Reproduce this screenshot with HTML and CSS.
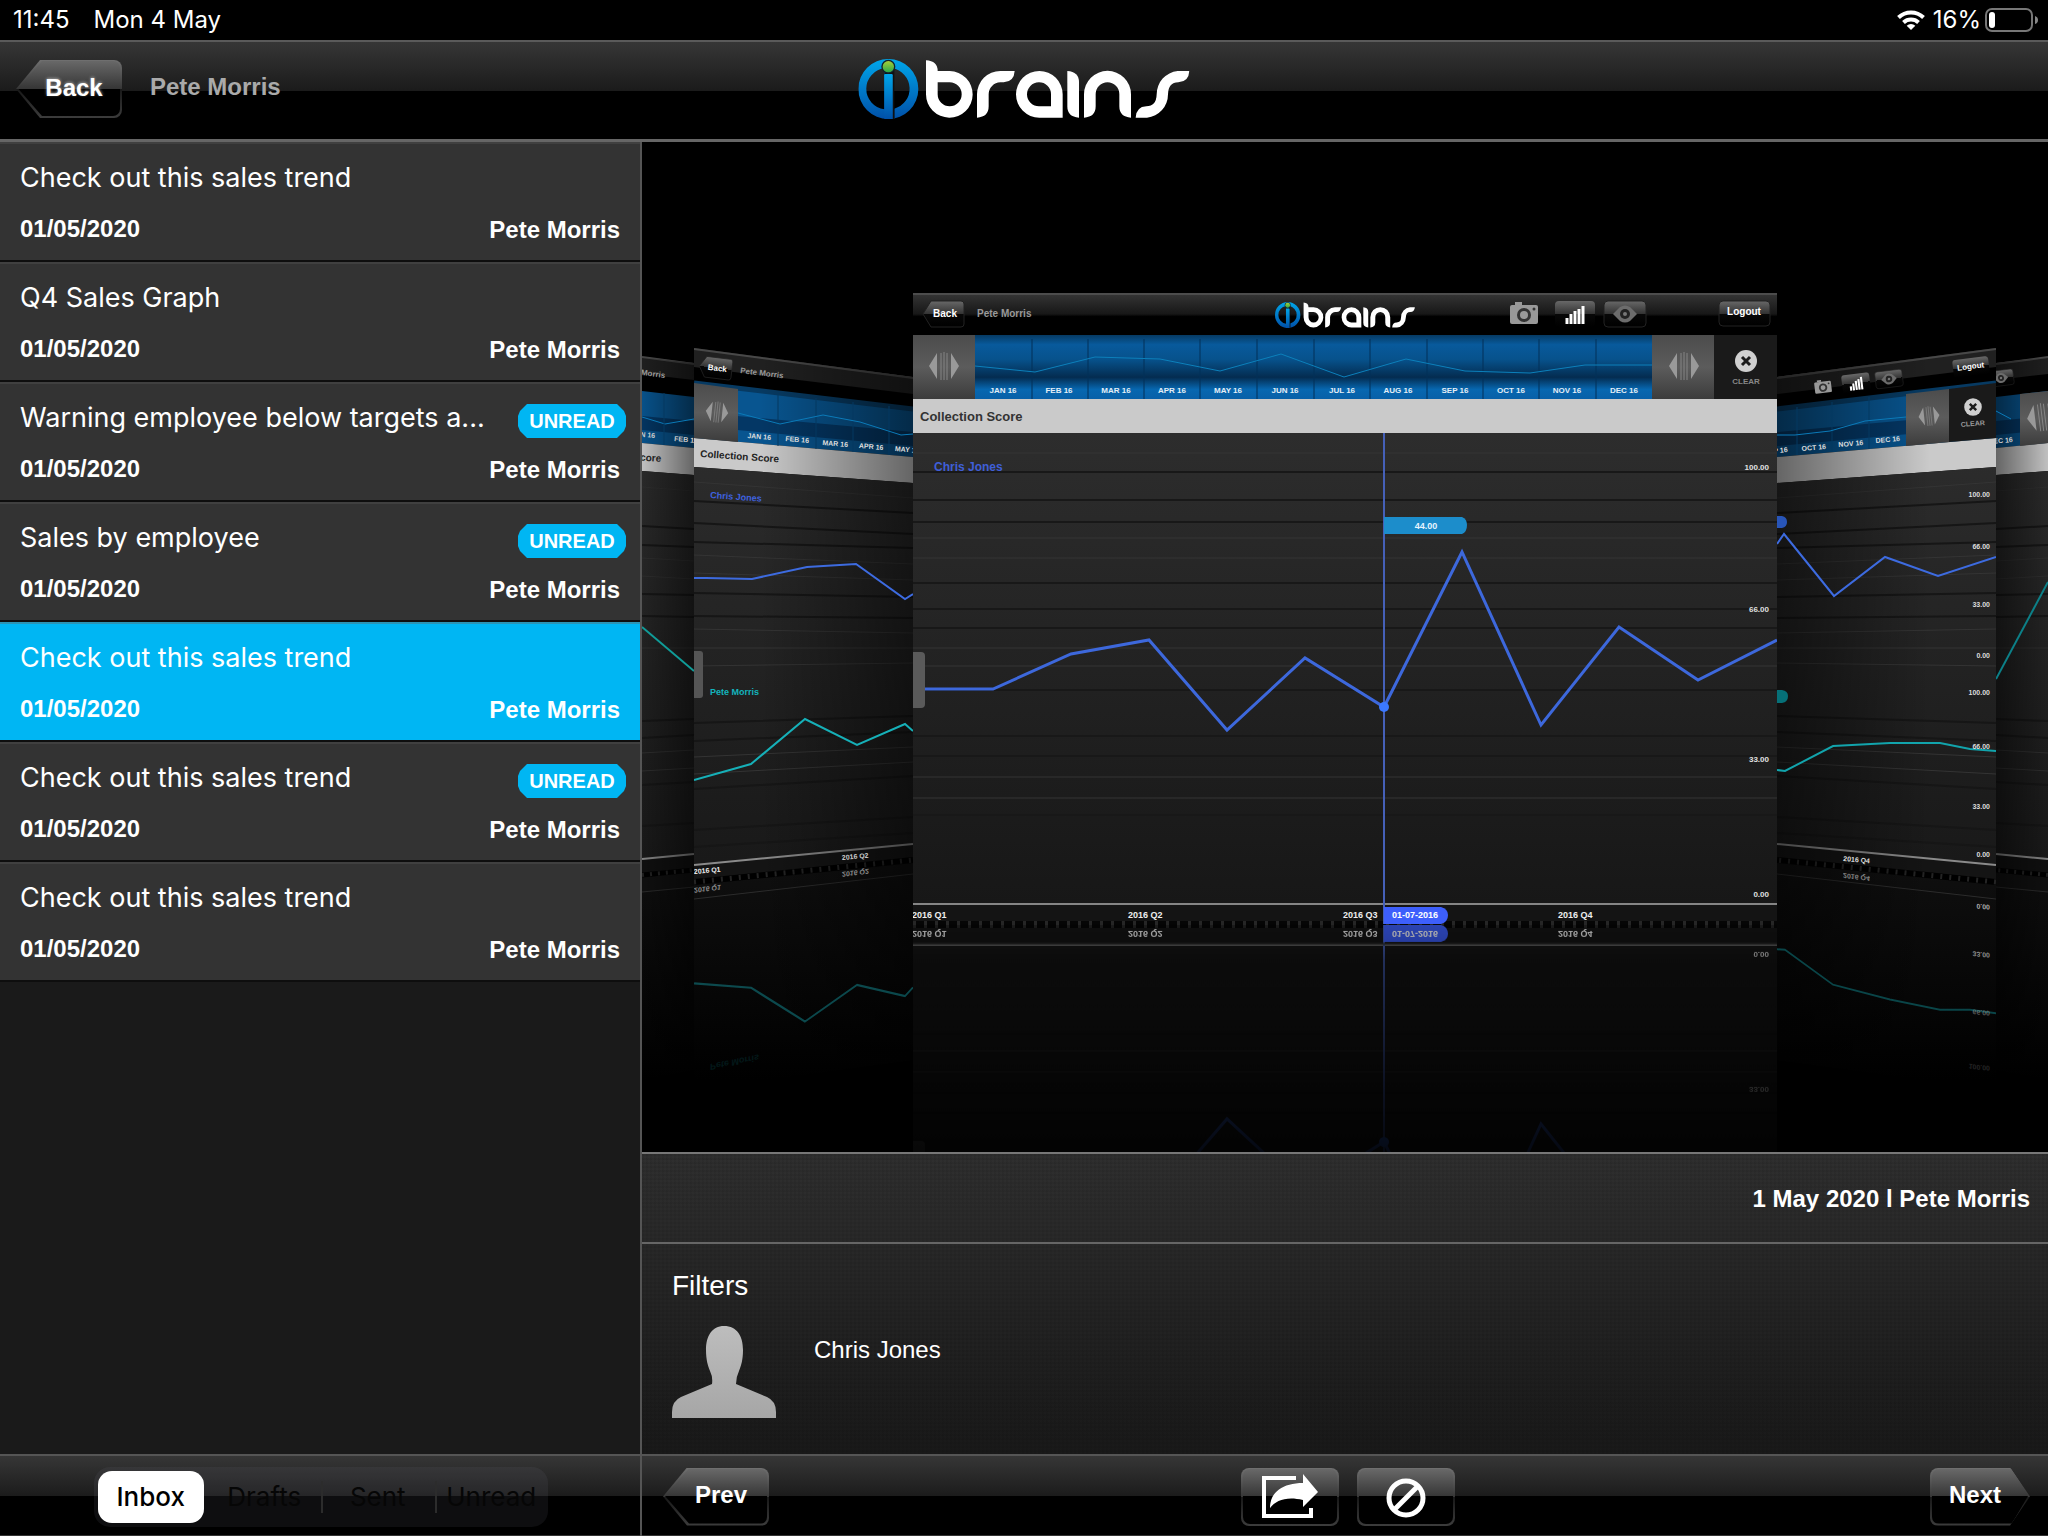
FILE: index.html
```html
<!DOCTYPE html>
<html lang="en">
<head>
<meta charset="utf-8">
<meta name="viewport" content="width=device-width, initial-scale=1">
<title>ibrains inbox</title>
<link rel="stylesheet" href="styles.css">
</head>
<body>
<div class="status">
  <span>11:45</span>
  <span>Mon 4 May</span>
  <span class="status-right">
    <svg class="wifi" viewBox="0 0 28 20" aria-hidden="true"><g fill="none" stroke="#fff" stroke-width="4"><path d="M1.500 7.500A18 18 0 0 1 26.500 7.500"/><path d="M6.500 12.500A11 11 0 0 1 21.500 12.500"/></g><path d="M14 20L9.700 15.800A6.200 6.200 0 0 1 18.300 15.800Z" fill="#fff"/></svg>
    <span>16%</span>
    <svg class="battery" viewBox="0 0 54 24" aria-hidden="true"><rect x="1" y="1" width="46" height="22" rx="6" fill="none" stroke="#777" stroke-width="2"/><rect x="4" y="4" width="6" height="16" rx="3" fill="#fff"/><path d="M50 8Q53 9 53 12Q53 15 50 16Z" fill="#888"/></svg>
  </span>
</div>

<header class="header">
  <div class="header-left">
    <button class="btn btn-left back" type="button">Back</button>
    <span class="user">Pete Morris</span>
  </div>
  <svg class="logo" viewBox="54 180 994 180" role="img" aria-label="ibrains">
    <defs>
      <linearGradient id="ring" x1="0" y1="0" x2="0" y2="1"><stop offset="0" stop-color="#00a6ea"/><stop offset="1" stop-color="#0050a8"/></linearGradient>
      <linearGradient id="dot" x1="0" y1="0" x2="0" y2="1"><stop offset="0" stop-color="#a6ce39"/><stop offset="1" stop-color="#2ba84a"/></linearGradient>
      <symbol id="brand" viewBox="54 180 994 180" preserveAspectRatio="none">
        <path fill="url(#ring)" fill-rule="evenodd" d="M144 180A90 90 0 1 1 144 360A90 90 0 1 1 144 180ZM132 331V208A62 62 0 0 0 132 331ZM162 329A62 62 0 0 0 156 208V225L157 360H162Z"/>
        <path fill="#111" d="M157 206H162V360H157ZM132 206H157V226H132Z"/>
        <path fill="url(#ring)" d="M132 229Q132 225 136 225H153Q157 225 157 229V360H132Z"/>
        <circle cx="144" cy="203" r="21" fill="#10222c"/><circle cx="144" cy="203" r="17" fill="url(#dot)"/>
        <g fill="#fff" fill-rule="evenodd">
          <path d="M257 184Q292 186 292 216H328A70 70 0 1 1 257 286ZM292 250V286A36 36 0 1 0 328 250Z"/>
          <path d="M410 356V286A70 70 0 0 1 480 216H523Q521 249 490 250H480A36 36 0 0 0 445 286V322Q445 354 410 356Z"/>
          <path d="M667 356H597A70 70 0 1 1 667 286ZM632 322V286A36 36 0 1 0 597 322Z"/>
          <path d="M681 216Q716 218 716 250V356Q681 354 681 322Z"/>
          <path d="M731 356V286A70 70 0 0 1 872 286V356Q837 354 837 322V286A35 36 0 0 0 766 286V322Q766 354 731 356Z"/>
          <path d="M886 356Q888 323 918 322Q948 322 949 286A70 70 0 0 1 1012 216H1047Q1045 249 1014 250Q984 250 983 286A70 70 0 0 1 920 356Z"/>
        </g>
      </symbol>
    </defs>
    <use href="#brand" x="54" y="180" width="994" height="180"/>
  </svg>
</header>

<main class="main">
  <section class="sidebar">
    <ul class="messages">
      <li class="message"><div class="message-main"><h2>Check out this sales trend</h2><time>01/05/2020</time></div><div class="message-side"><span class="sender">Pete Morris</span></div></li>
      <li class="message"><div class="message-main"><h2>Q4 Sales Graph</h2><time>01/05/2020</time></div><div class="message-side"><span class="sender">Pete Morris</span></div></li>
      <li class="message"><div class="message-main"><h2>Warning employee below targets a...</h2><time>01/05/2020</time></div><div class="message-side"><span class="badge">UNREAD</span><span class="sender">Pete Morris</span></div></li>
      <li class="message"><div class="message-main"><h2>Sales by employee</h2><time>01/05/2020</time></div><div class="message-side"><span class="badge">UNREAD</span><span class="sender">Pete Morris</span></div></li>
      <li class="message selected"><div class="message-main"><h2>Check out this sales trend</h2><time>01/05/2020</time></div><div class="message-side"><span class="sender">Pete Morris</span></div></li>
      <li class="message"><div class="message-main"><h2>Check out this sales trend</h2><time>01/05/2020</time></div><div class="message-side"><span class="badge">UNREAD</span><span class="sender">Pete Morris</span></div></li>
      <li class="message"><div class="message-main"><h2>Check out this sales trend</h2><time>01/05/2020</time></div><div class="message-side"><span class="sender">Pete Morris</span></div></li>
    </ul>
    <div class="toolbar toolbar-side">
      <div class="segments" role="radiogroup" aria-label="Folder">
        <label><input type="radio" name="folder" checked><span>Inbox</span></label>
        <label><input type="radio" name="folder"><span>Drafts</span></label>
        <label><input type="radio" name="folder"><span>Sent</span></label>
        <label><input type="radio" name="folder"><span>Unread</span></label>
      </div>
    </div>
  </section>

  <section class="content">
    <div class="stage">
    <svg class="flow" viewBox="642 142 1406 1010" preserveAspectRatio="xMidYMid slice">
      <defs>
        <linearGradient id="bar" x1="0" y1="0" x2="0" y2="1"><stop offset="0" stop-color="#363636"/><stop offset=".5" stop-color="#171717"/><stop offset=".56" stop-color="#000"/></linearGradient>
        <linearGradient id="blue" x1="0" y1="0" x2="0" y2="1"><stop offset="0" stop-color="#063a63"/><stop offset=".15" stop-color="#085a9c"/><stop offset=".38" stop-color="#07528c"/><stop offset=".66" stop-color="#042c50"/><stop offset=".85" stop-color="#0767b0"/><stop offset="1" stop-color="#0860a8"/></linearGradient>
        <linearGradient id="plot" gradientUnits="userSpaceOnUse" x1="0" y1="433" x2="0" y2="904"><stop offset="0" stop-color="#2d2d2d"/><stop offset="1" stop-color="#171717"/></linearGradient>
        <linearGradient id="grip" x1="0" y1="0" x2="0" y2="1"><stop offset="0" stop-color="#4c4c4c"/><stop offset=".5" stop-color="#5c5c5c"/><stop offset="1" stop-color="#3c3c3c"/></linearGradient>
        <linearGradient id="key" x1="0" y1="0" x2="0" y2="1"><stop offset="0" stop-color="#686868"/><stop offset=".5" stop-color="#333"/><stop offset=".5" stop-color="#080808"/><stop offset="1" stop-color="#000"/></linearGradient>
        <linearGradient id="shade" gradientUnits="userSpaceOnUse" x1="760" y1="0" x2="913" y2="0"><stop offset="0" stop-opacity="0"/><stop offset="1" stop-opacity=".5"/></linearGradient>
        <linearGradient id="shadeFar" gradientUnits="userSpaceOnUse" x1="642" y1="0" x2="694" y2="0"><stop offset="0" stop-opacity=".05"/><stop offset="1" stop-opacity=".5"/></linearGradient>
        <linearGradient id="sink" gradientUnits="userSpaceOnUse" x1="0" y1="870" x2="0" y2="1080"><stop offset="0" stop-color="#0f0f0f"/><stop offset="1" stop-color="#000"/></linearGradient>
        <linearGradient id="fade" gradientUnits="userSpaceOnUse" x1="0" y1="924" x2="0" y2="1152"><stop offset="0" stop-color="#b4b4b4"/><stop offset=".09" stop-color="#a0a0a0"/><stop offset=".16" stop-color="#7c7c7c"/><stop offset=".7" stop-color="#303030"/><stop offset="1" stop-color="#161616"/></linearGradient>
        <mask id="mirrorMask" maskUnits="userSpaceOnUse" x="913" y="924" width="864" height="228"><rect x="913" y="924" width="864" height="228" fill="url(#fade)"/></mask>
        <clipPath id="cardClip"><rect x="913" y="293" width="864" height="632"/></clipPath>
        <clipPath id="left"><path d="M694 340H913V1152H694Z"/></clipPath>
        <clipPath id="leftFar"><path d="M642 340H694V1152H642Z"/></clipPath>
        <clipPath id="right"><path d="M1777 340H1996V1152H1777Z"/></clipPath>
        <clipPath id="rightFar"><path d="M1996 340H2048V1152H1996Z"/></clipPath>
        <g id="arrows"><path d="M-15 0L-7-13V13ZM15 0L7-13V13Z" fill="#999"/><path d="M-3-13V14M0-14V14M3-13V14" stroke="#858585"/></g>
        <g id="camera"><rect x="-14" y="-9" width="28" height="19" rx="2" fill="#999"/><path d="M-9-9V-12H-2V-9" fill="#999"/><circle r="7" cy="1" fill="#333"/><circle r="4" cy="1" fill="#999"/><circle cx="10" cy="-5" r="1.500" fill="#333"/></g>
        <g id="bars"><rect x="-20" y="-13" width="40" height="26" rx="4" fill="url(#key)"/><path d="M-8 10V4M-4 10V0M0 10V-3M4 10V-5M8 10V-8" stroke="#fff" stroke-width="3"/></g>
        <g id="eye"><rect x="-21" y="-13" width="42" height="26" rx="4" fill="url(#key)" stroke="#222"/><path d="M-12 0L-5-7Q0-10 5-7L12 0L5 7Q0 10-5 7Z" fill="#6c6c6c"/><circle r="5" fill="#222"/><circle r="2" fill="#777"/></g>
        <g id="clearIcon"><circle r="11" fill="#d0d0d0"/><path d="M-4-4L4 4M4-4L-4 4" stroke="#1b1b1b" stroke-width="3"/></g>
        <g id="backKey"><path d="M-21 0L-13-13H17Q20-13 20-10V10Q20 13 17 13H-13Z" fill="url(#key)" stroke="#222"/></g>

        <g id="sideFrame">
          <path d="M694 348L913 377V413L694 387Z" fill="#000"/>
          <path d="M694 348L913 377V394L694 367Z" fill="#202020"/>
          <path d="M694 349L913 378" stroke="#484848" stroke-width="2"/>
          <path d="M694 383L913 409V457L694 438Z" fill="#085590"/>
          <path d="M694 412L913 432V446L694 426Z" fill="#04305a" opacity=".8"/>
          <path d="M694 383L913 409" stroke="#073a62" stroke-width="5"/>
          <path d="M694 438L913 457V483L694 467Z" fill="#cacaca"/>
          <path d="M694 467L913 483V844L694 865Z" fill="url(#plot)"/>
          <g fill="none" stroke="#343434"><path d="M694 482L913 498M694 555L913 564M694 573L913 580M694 648L913 648M694 757L913 747M694 774L913 762M694 629L913 633M694 666L913 663"/></g>
          <g fill="none" stroke="#161616" stroke-width="2"><path d="M694 501L913 513M694 523L913 534M694 542L913 548M694 593L913 597M694 616L913 618M694 723L913 716M694 741L913 732M694 789L913 776M694 830L913 817M694 847L913 833"/></g>
          <path d="M694 865L913 844V860L694 882Z" fill="#141414"/>
          <path d="M694 882L913 860V1060L694 1090Z" fill="url(#sink)"/>
          <path d="M694 882L913 860" stroke="#000" stroke-width="6"/>
          <path d="M694 882L913 860" stroke="#242424" stroke-width="5" stroke-dasharray="2 7"/>
          <path d="M694 865L913 844" stroke="#8a8a8a" stroke-width="2"/>
          <path d="M694 899L913 874" stroke="#2c2c2c"/>
          <path d="M694 348L913 377V1152H694Z" fill="url(#shade)"/>
        </g>
        <g id="farFrame">
          <path d="M642 357L694 363V398L642 391Z" fill="#000"/>
          <path d="M642 357L694 363V380L642 374Z" fill="#202020"/>
          <path d="M642 357L694 364" stroke="#484848" stroke-width="2"/>
          <path d="M642 391L694 397V448L642 443Z" fill="#085590"/>
          <path d="M642 416L694 421V435L642 430Z" fill="#04305a" opacity=".8"/>
          <path d="M642 443L694 448V475L642 471Z" fill="#cacaca"/>
          <path d="M642 471L694 475V854L642 859Z" fill="url(#plot)"/>
          <g fill="none" stroke="#303030"><path d="M642 487L694 491M642 558L694 561M642 576L694 579M642 648H694M642 753L694 750M642 771L694 768"/></g>
          <g fill="none" stroke="#161616" stroke-width="2"><path d="M642 526L694 529M642 545L694 547M642 594L694 595M642 616L694 617M642 721L694 719M642 738L694 735M642 785L694 782M642 826L694 823"/></g>
          <path d="M642 859L694 854V892L642 896Z" fill="#101010"/>
          <path d="M642 892L694 887V1070L642 1080Z" fill="url(#sink)"/>
          <path d="M642 875L694 870" stroke="#000" stroke-width="5"/>
          <path d="M642 875L694 870" stroke="#222" stroke-width="4" stroke-dasharray="2 6"/>
          <path d="M642 859L694 854" stroke="#888" stroke-width="2"/>
          <path d="M642 892L694 887" stroke="#2c2c2c"/>
          <path d="M642 357L694 363V1152H642Z" fill="url(#shadeFar)"/>
        </g>
      </defs>

      <rect x="642" y="142" width="1406" height="1010" fill="#000"/>

      <g clip-path="url(#leftFar)">
        <use href="#farFrame"/>
        <text class="micro" x="665" y="378" text-anchor="end" fill="#999" transform="rotate(7 665 378)">Pete Morris</text>
        <text class="side-month" x="655" y="438" text-anchor="end" fill="#ccc" transform="rotate(5 655 438)">JAN 16</text>
        <text class="side-month" x="674" y="441" fill="#ccc" transform="rotate(5 674 441)">FEB 16</text>
        <text class="small" x="661" y="462" text-anchor="end" fill="#222" transform="rotate(4 661 462)">Collection Score</text>
        <path d="M642 417L665 424L694 419" fill="none" stroke="#0b7ab8" stroke-width="1"/>
        <path d="M664 393V445" stroke="#043860"/>
        <path d="M642 627L694 671" stroke="#109c98" stroke-width="2"/>
      </g>

      <g clip-path="url(#rightFar)">
        <use href="#farFrame" transform="translate(2690 0) scale(-1 1)"/>
        <use href="#eye" transform="translate(2001 378) rotate(-7) scale(.6)"/>
        <path d="M2020 394L2048 391V443L2020 446Z" fill="url(#grip)"/>
        <use href="#arrows" transform="translate(2042 417) rotate(-7)"/>
        <path d="M1996 411L2011 419" stroke="#0b7ab8"/>
        <text class="side-month" x="2013" y="442" text-anchor="end" fill="#ccc" transform="rotate(-5 2013 442)">DEC 16</text>
        <path d="M1996 679L2048 582" stroke="#0c8088" stroke-width="2"/>
      </g>

      <g clip-path="url(#left)">
        <use href="#sideFrame"/>
        <use href="#backKey" transform="translate(716 368) rotate(7) scale(.8)"/>
        <text class="micro" x="717" y="371" text-anchor="middle" fill="#fff" transform="rotate(7 717 371)">Back</text>
        <text class="micro" x="740" y="373" fill="#999" transform="rotate(7 740 373)">Pete Morris</text>
        <path d="M694 383L738 389V442L694 438Z" fill="url(#grip)"/>
        <use href="#arrows" transform="translate(717 412) rotate(6) scale(.75)"/>
        <path d="M778 393V446M816 398V449M853 402V452M889 406V455" stroke="#043860"/>
        <path d="M738 413L780 424L823 415L860 422L901 435L913 434" fill="none" stroke="#0b7ab8"/>
        <g class="side-month" text-anchor="middle" fill="#ddd">
          <text x="759" y="439" transform="rotate(5 759 439)">JAN 16</text>
          <text x="797" y="442" transform="rotate(5 797 442)">FEB 16</text>
          <text x="835" y="446" transform="rotate(5 835 446)">MAR 16</text>
          <text x="871" y="449" transform="rotate(5 871 449)">APR 16</text>
          <text x="907" y="452" transform="rotate(5 907 452)">MAY 16</text>
        </g>
        <text class="small" x="700" y="457" fill="#222" transform="rotate(4 700 457)">Collection Score</text>
        <text class="tiny" x="710" y="498" fill="#3f63e0" transform="rotate(4 710 498)">Chris Jones</text>
        <path d="M694 578H706L752 579L807 567L856 564L905 599L913 594" fill="none" stroke="#3d6be0" stroke-width="2"/>
        <text class="tiny" x="710" y="695" fill="#13b5bd">Pete Morris</text>
        <path id="tealLeft" d="M694 780L751 764L805 719L857 745L905 724L913 731" fill="none" stroke="#16b0b8" stroke-width="2"/>
        <use href="#tealLeft" transform="matrix(1 -.2055 0 -1 0 1906)" opacity=".4"/>
        <path d="M694 651H700Q703 651 703 654V695Q703 698 700 698H694Z" fill="#555"/>
        <text class="side-month" x="694" y="874" fill="#eee" transform="rotate(-5 694 874)">2016 Q1</text>
        <text class="side-month" x="842" y="860" fill="#ccc" transform="rotate(-5 842 860)">2016 Q2</text>
        <g class="side-month" opacity=".6" fill="#ddd"><text transform="matrix(1 -.12 0 -1 694 888)">2016 Q1</text><text transform="matrix(1 -.12 0 -1 842 872)">2016 Q2</text></g>
        <text class="tiny" transform="matrix(1 -.2 0 -1 710 1064)" fill="#13b5bd" opacity=".12">Pete Morris</text>
      </g>

      <g clip-path="url(#right)">
        <use href="#sideFrame" transform="translate(2690 0) scale(-1 1)"/>
        <use href="#camera" transform="translate(1823 387) rotate(-7) scale(.6)"/>
        <use href="#bars" transform="translate(1856 383) rotate(-7) scale(.7)"/>
        <use href="#eye" transform="translate(1889 379) rotate(-7) scale(.65)"/>
        <rect x="1953" y="358" width="36" height="18" rx="3" fill="url(#key)" transform="rotate(-7 1971 367)"/>
        <text class="micro" x="1971" y="369" text-anchor="middle" fill="#fff" transform="rotate(-7 1971 369)">Logout</text>
        <path d="M1906 394L1949 389V442L1906 446Z" fill="url(#grip)"/>
        <path d="M1949 389L1996 383V438L1949 442Z" fill="#1a1a1a"/>
        <use href="#arrows" transform="translate(1929 416) rotate(-6) scale(.7)"/>
        <use href="#clearIcon" transform="translate(1973 407) scale(.8)"/>
        <text class="side-month" x="1973" y="426" text-anchor="middle" fill="#999" transform="rotate(-5 1973 426)">CLEAR</text>
        <path d="M1797 407V455M1832 402V452M1869 397V449" stroke="#043860"/>
        <path d="M1777 435H1795L1830 431L1865 421L1906 417" fill="none" stroke="#0b7ab8"/>
        <g class="side-month" text-anchor="middle" fill="#ddd">
          <text x="1776" y="453" transform="rotate(-5 1776 453)">SEP 16</text>
          <text x="1814" y="450" transform="rotate(-5 1814 450)">OCT 16</text>
          <text x="1851" y="446" transform="rotate(-5 1851 446)">NOV 16</text>
          <text x="1888" y="442" transform="rotate(-5 1888 442)">DEC 16</text>
        </g>
        <path d="M1777 516H1782Q1787 517 1787 522Q1787 527 1782 528H1777Z" fill="#2855b8"/>
        <path d="M1777 690H1782Q1788 691 1788 696Q1788 702 1782 703H1777Z" fill="#067078"/>
        <path d="M1777 544L1784 534L1834 596L1885 557L1938 576L1996 557" fill="none" stroke="#3d6be0" stroke-width="2"/>
        <path id="tealRight" d="M1777 770L1785 771L1833 746L1890 743L1940 743L1970 749L1996 751" fill="none" stroke="#12a4ac" stroke-width="2"/>
        <use href="#tealRight" transform="matrix(1 .2055 0 -1 0 1354)" opacity=".4"/>
        <g class="side-month" text-anchor="end" fill="#ddd">
          <text x="1990" y="497">100.00</text><text x="1990" y="549">66.00</text><text x="1990" y="607">33.00</text><text x="1990" y="658">0.00</text>
          <text x="1990" y="695">100.00</text><text x="1990" y="749">66.00</text><text x="1990" y="809">33.00</text><text x="1990" y="857">0.00</text>
        </g>
        <g class="side-month" text-anchor="end" fill="#aaa">
          <text transform="matrix(1 .1 0 -1 1990 905)">0.00</text><text transform="matrix(1 .1 0 -1 1990 953)" opacity=".8">33.00</text><text transform="matrix(1 .1 0 -1 1990 1011)" opacity=".5">66.00</text><text transform="matrix(1 .1 0 -1 1990 1066)" opacity=".2">100.00</text>
        </g>
        <text class="side-month" x="1843" y="861" fill="#ddd" transform="rotate(5 1843 861)">2016 Q4</text>
        <text class="side-month" transform="matrix(1 .12 0 -1 1843 873)" fill="#ccc" opacity=".6">2016 Q4</text>
      </g>

      <g id="card" clip-path="url(#cardClip)">
        <rect x="913" y="293" width="864" height="42" fill="url(#bar)"/>
        <path d="M913 294H1777" stroke="#4c4c4c" stroke-width="2"/>
        <use href="#backKey" transform="translate(944 314)"/>
        <text class="small" x="945" y="317" text-anchor="middle" fill="#fff">Back</text>
        <text class="small" x="977" y="317" fill="#999">Pete Morris</text>
        <use href="#brand" x="1275" y="302" width="140" height="26"/>
        <use href="#camera" x="1524" y="314"/><use href="#bars" x="1575" y="314"/><use href="#eye" x="1625" y="314"/>
        <rect x="1719" y="301" width="51" height="25" rx="4" fill="url(#key)" stroke="#222"/>
        <text class="small" x="1744" y="315" text-anchor="middle" fill="#fff">Logout</text>
        <rect x="975" y="335" width="677" height="64" fill="url(#blue)"/>
        <rect x="913" y="335" width="62" height="64" fill="url(#grip)"/>
        <rect x="1652" y="335" width="62" height="64" fill="url(#grip)"/>
        <rect x="1714" y="335" width="63" height="64" fill="#1a1a1a"/>
        <use href="#arrows" x="944" y="366"/><use href="#arrows" x="1684" y="366"/>
        <use href="#clearIcon" x="1746" y="361"/>
        <text class="micro" x="1746" y="384" text-anchor="middle" fill="#888">CLEAR</text>
        <path d="M1032 339V399M1088 339V399M1144 339V399M1200 339V399M1257 339V399M1314 339V399M1370 339V399M1427 339V399M1483 339V399M1539 339V399M1596 339V399" stroke="#033058"/>
        <path d="M975 366L1035 372L1095 357L1160 359L1220 371L1281 354L1344 377L1406 359L1465 371L1530 373L1585 365H1652" fill="none" stroke="#0c80bb" stroke-width="1"/>
        <g class="micro" text-anchor="middle" fill="#e4eef6">
          <text x="1003" y="393">JAN 16</text><text x="1059" y="393">FEB 16</text><text x="1116" y="393">MAR 16</text><text x="1172" y="393">APR 16</text><text x="1228" y="393">MAY 16</text><text x="1285" y="393">JUN 16</text><text x="1342" y="393">JUL 16</text><text x="1398" y="393">AUG 16</text><text x="1455" y="393">SEP 16</text><text x="1511" y="393">OCT 16</text><text x="1567" y="393">NOV 16</text><text x="1624" y="393">DEC 16</text>
        </g>
        <rect x="913" y="399" width="864" height="34" fill="#cacaca"/>
        <text class="caption" x="920" y="421" fill="#333">Collection Score</text>
        <rect x="913" y="433" width="864" height="471" fill="url(#plot)"/>
        <g stroke="#343434"><path d="M913 453H1777M913 538H1777M913 558H1777M913 648H1777M913 666H1777M913 777H1777M913 798H1777" /></g>
        <g stroke="#181818" stroke-width="2"><path d="M913 472H1777M913 500H1777M913 522H1777M913 583H1777M913 609H1777M913 628H1777M913 690H1777M913 736H1777M913 756H1777M913 815H1777" /></g>
        <rect x="913" y="904" width="864" height="21" fill="#141414"/>
        <path d="M913 924H1777" stroke="#060606" stroke-width="6"/>
        <path d="M913 924H1777" stroke="#262626" stroke-width="6" stroke-dasharray="3 8"/>
        <path d="M913 904H1777" stroke="#858585" stroke-width="2"/>
        <text class="mini" x="934" y="471" fill="#3f5fd8">Chris Jones</text>
        <path d="M924 689H993L1071 654L1149 640L1227 730L1305 658L1384 707L1462 552L1541 725L1619 627L1698 680L1777 640" fill="none" stroke="#3d68dc" stroke-width="3"/>
        <path d="M1384 433V924" stroke="#4560b8" stroke-width="2"/>
        <circle cx="1384" cy="707" r="5" fill="#3b78ff"/>
        <path d="M1384 517H1462Q1467 519 1467 525Q1467 532 1462 534H1384Z" fill="#1c8dcb"/>
        <text class="tiny" x="1426" y="529" text-anchor="middle" fill="#e6f4ff">44.00</text>
        <path d="M913 652H921Q925 652 925 656V704Q925 708 921 708H913Z" fill="#5a5a5a"/>
        <g class="micro" text-anchor="end" fill="#e0e0e0"><text x="1769" y="470">100.00</text><text x="1769" y="612">66.00</text><text x="1769" y="762">33.00</text><text x="1769" y="897">0.00</text></g>
        <g class="tiny" fill="#eee"><text x="912" y="918">2016 Q1</text><text x="1128" y="918">2016 Q2</text><text x="1343" y="918">2016 Q3</text><text x="1558" y="918">2016 Q4</text></g>
        <path d="M1384 907H1441Q1448 909 1448 915Q1448 922 1441 924H1384Z" fill="#3d5ffc"/>
        <text class="tiny" x="1415" y="918" text-anchor="middle" fill="#fff">01-07-2016</text>
      </g>
      <g mask="url(#mirrorMask)"><rect x="913" y="924" width="864" height="228" fill="#000"/><use href="#card" transform="translate(0 1849) scale(1 -1)"/></g>
      <path d="M913 944H1777" stroke="#1c1c1c" stroke-width="3" opacity=".7"/>
    </svg>
    </div>

    <div class="details">
      <p class="byline">1 May 2020 l Pete Morris</p>
      <div class="filters">
        <h3>Filters</h3>
        <div class="filter">
          <svg class="avatar" viewBox="0 0 104 92" aria-hidden="true"><defs><linearGradient id="skin" x1="0" y1="0" x2="0" y2="1"><stop offset="0" stop-color="#bdbdbd"/><stop offset="1" stop-color="#a6a6a6"/></linearGradient></defs><path fill="url(#skin)" d="M52 0C65 0 71 10 71 24C71 34 69 40 67 45Q64 51 64 58L95 71Q104 75 104 86V92H0V86Q0 75 9 71L40 58Q41 51 38 45C36 40 34 34 34 24C34 10 40 0 52 0Z"/></svg>
          <span>Chris Jones</span>
        </div>
      </div>
    </div>

    <div class="toolbar toolbar-main">
      <button class="btn btn-left" type="button">Prev</button>
      <div class="actions">
        <button class="btn btn-icon" type="button" aria-label="Share"><svg viewBox="0 0 58 46" aria-hidden="true"><path d="M35 4H3V42H50V34" fill="none" stroke="#fff" stroke-width="4"/><path d="M42 0L57 18L42 33V26C26 22 15 26 9 34C9 18 22 9 42 9Z" fill="#fff"/></svg></button>
        <button class="btn btn-icon" type="button" aria-label="Block"><svg viewBox="0 0 58 46" aria-hidden="true"><g fill="none" stroke="#fff" stroke-width="5"><circle cx="29" cy="24" r="17"/><path d="M41 12L17 36"/></g></svg></button>
      </div>
      <button class="btn btn-right" type="button">Next</button>
    </div>
  </section>
</main>
</body>
</html>
```
FILE: styles.css
```css
* { box-sizing: border-box; }

body {
  margin: 0;
  min-height: 100vh;
  display: flex;
  flex-direction: column;
  background: #000;
  color: #fff;
  font-family: "Liberation Sans", Arial, sans-serif;
}

h2, h3, p, ul { margin: 0; padding: 0; }

.status {
  height: 40px;
  display: flex;
  align-items: center;
  gap: 24px;
  padding: 0 9px 0 13px;
  font: 24px/32px Inter, sans-serif;
}
.status-right { display: flex; align-items: center; gap: 8px; margin-left: auto; }
.status-right span { margin-right: -4px; }
.wifi { width: 28px; height: 20px; }
.battery { width: 54px; height: 24px; }

.header {
  display: grid;
  grid-template-columns: 1fr auto 1fr;
  align-items: center;
  padding: 17px 16px 20px 16px;
  border-top: 2px solid #5a5a5a;
  border-bottom: 3px solid #666;
  background: linear-gradient(#363636, #1b1b1b 50%, #000 51%);
}
.header-left { display: flex; align-items: center; gap: 28px; }
.user { font-size: 24px; line-height: 30px; font-weight: bold; color: #aaa; padding-bottom: 4px; }
.logo { width: 332px; height: 60px; display: block; }

.btn {
  position: relative;
  isolation: isolate;
  display: flex;
  align-items: center;
  justify-content: center;
  height: 58px;
  padding: 0 0 4px;
  border: 0;
  border-radius: 8px;
  color: #fff;
  font: bold 24px/30px "Liberation Sans", Arial, sans-serif;
  background: linear-gradient(#707070, #363636 50%, #181818 50%, #3c3c3c);
  clip-path: var(--shape);
}
.btn::before {
  content: "";
  position: absolute;
  z-index: -1;
  inset: 1px 2px 2px;
  border-radius: 7px;
  background: linear-gradient(#686868, #363636 50%, #000 50%);
  clip-path: var(--shape);
}
.btn-left {
  --shape: polygon(0 50%, 24px 0, 100% 0, 100% 100%, 24px 100%);
  width: 106px;
  padding-left: 10px;
}
.btn-right {
  --shape: polygon(100% 50%, 80px 0, 0 0, 0 100%, 80px 100%);
  width: 100px;
  padding-right: 10px;
}
.back { text-shadow: 0 -1px 3px #999; padding-bottom: 2px; }
.btn-icon { width: 98px; padding: 0; }
.btn-icon svg { width: 58px; height: 46px; }

.main { flex: 1; display: flex; align-items: stretch; }

.sidebar {
  flex: 0 0 642px;
  display: flex;
  flex-direction: column;
  border-right: 2px solid #555;
  background: #1a1a1a;
}
.messages { flex: 1; list-style: none; }
.message {
  display: flex;
  justify-content: space-between;
  height: 120px;
  padding: 17px 14px 0 20px;
  border-top: 2px solid #404040;
  border-bottom: 2px solid #0e0e0e;
  background: #333;
}
.message.selected { background: #00b6f3; border-top-color: #2b94b5; }
.message h2 { font: 27px/34px Inter, sans-serif; white-space: nowrap; }
.message time { display: block; margin-top: 20px; font-size: 24px; line-height: 28px; font-weight: bold; }
.message-side { display: flex; flex-direction: column; align-items: flex-end; justify-content: flex-end; padding-bottom: 15px; }
.sender { padding-right: 6px; font-size: 24px; line-height: 30px; font-weight: bold; }
.badge {
  width: 108px;
  margin-bottom: 17px;
  font-size: 20px;
  line-height: 34px;
  font-weight: bold;
  text-align: center;
  background: #00b6f3;
  clip-path: polygon(9px 0, calc(100% - 9px) 0, calc(100% - 2px) 7px, 100% 12px, 100% 22px, calc(100% - 2px) 27px, calc(100% - 9px) 100%, 9px 100%, 2px 27px, 0 22px, 0 12px, 2px 7px);
}

.toolbar {
  height: 82px;
  display: flex;
  align-items: center;
  padding-top: 2px;
  border-top: 2px solid #555;
  border-bottom: 1px solid #333;
  background: linear-gradient(#363636, #1c1c1c 50%, #000 51%);
}
.toolbar-side { justify-content: center; padding-left: 2px; }
.toolbar-main { justify-content: space-between; padding-right: 18px; padding-left: 21px; }
.actions { display: flex; gap: 18px; margin-right: 4px; }

.segments {
  display: grid;
  grid-template-columns: repeat(4, 1fr);
  width: 454px;
  border-radius: 16px;
  background: rgba(118, 118, 128, .12);
}
.segments label { position: relative; padding: 4px; }
.segments input { position: absolute; opacity: 0; margin: 0; }
.segments span {
  display: block;
  border-radius: 14px;
  font: 26px/52px Inter, sans-serif;
  text-align: center;
  color: #060606;
}
.segments input:checked + span { background: #fff; color: #000; font-weight: 500; }
.segments label:nth-child(n+3)::before {
  content: "";
  position: absolute;
  left: 0;
  top: 14px;
  bottom: 14px;
  width: 2px;
  background: #2c2c2c;
}

.content { flex: 1; min-width: 0; display: flex; flex-direction: column; }
.stage { flex: 1; min-height: 0; position: relative; }
.flow { position: absolute; inset: 0; width: 100%; height: 100%; }
.flow text { font-weight: bold; }
.flow .side-month { font-size: 7px; }
.flow .micro { font-size: 8px; }
.flow .tiny { font-size: 9px; }
.flow .small { font-size: 10px; }
.flow .mini { font-size: 12px; }
.flow .caption { font-size: 13px; }

.details {
  border-top: 2px solid #777;
  background:
    repeating-linear-gradient(90deg, rgba(0, 0, 0, .06) 0 2px, transparent 2px 4px),
    repeating-linear-gradient(rgba(0, 0, 0, .06) 0 2px, transparent 2px 4px),
    linear-gradient(#2f2f2f, #191919);
}
.byline {
  padding: 30px 18px 28px;
  border-bottom: 2px solid #666;
  font-size: 24px;
  line-height: 30px;
  font-weight: bold;
  text-align: right;
}
.filters { padding: 25px 30px 36px; }
.filters h3 { font-size: 28px; line-height: 34px; font-weight: normal; }
.filter { display: flex; gap: 38px; padding-top: 23px; font-size: 24px; line-height: 48px; }
.avatar { width: 104px; height: 92px; display: block; }
```
